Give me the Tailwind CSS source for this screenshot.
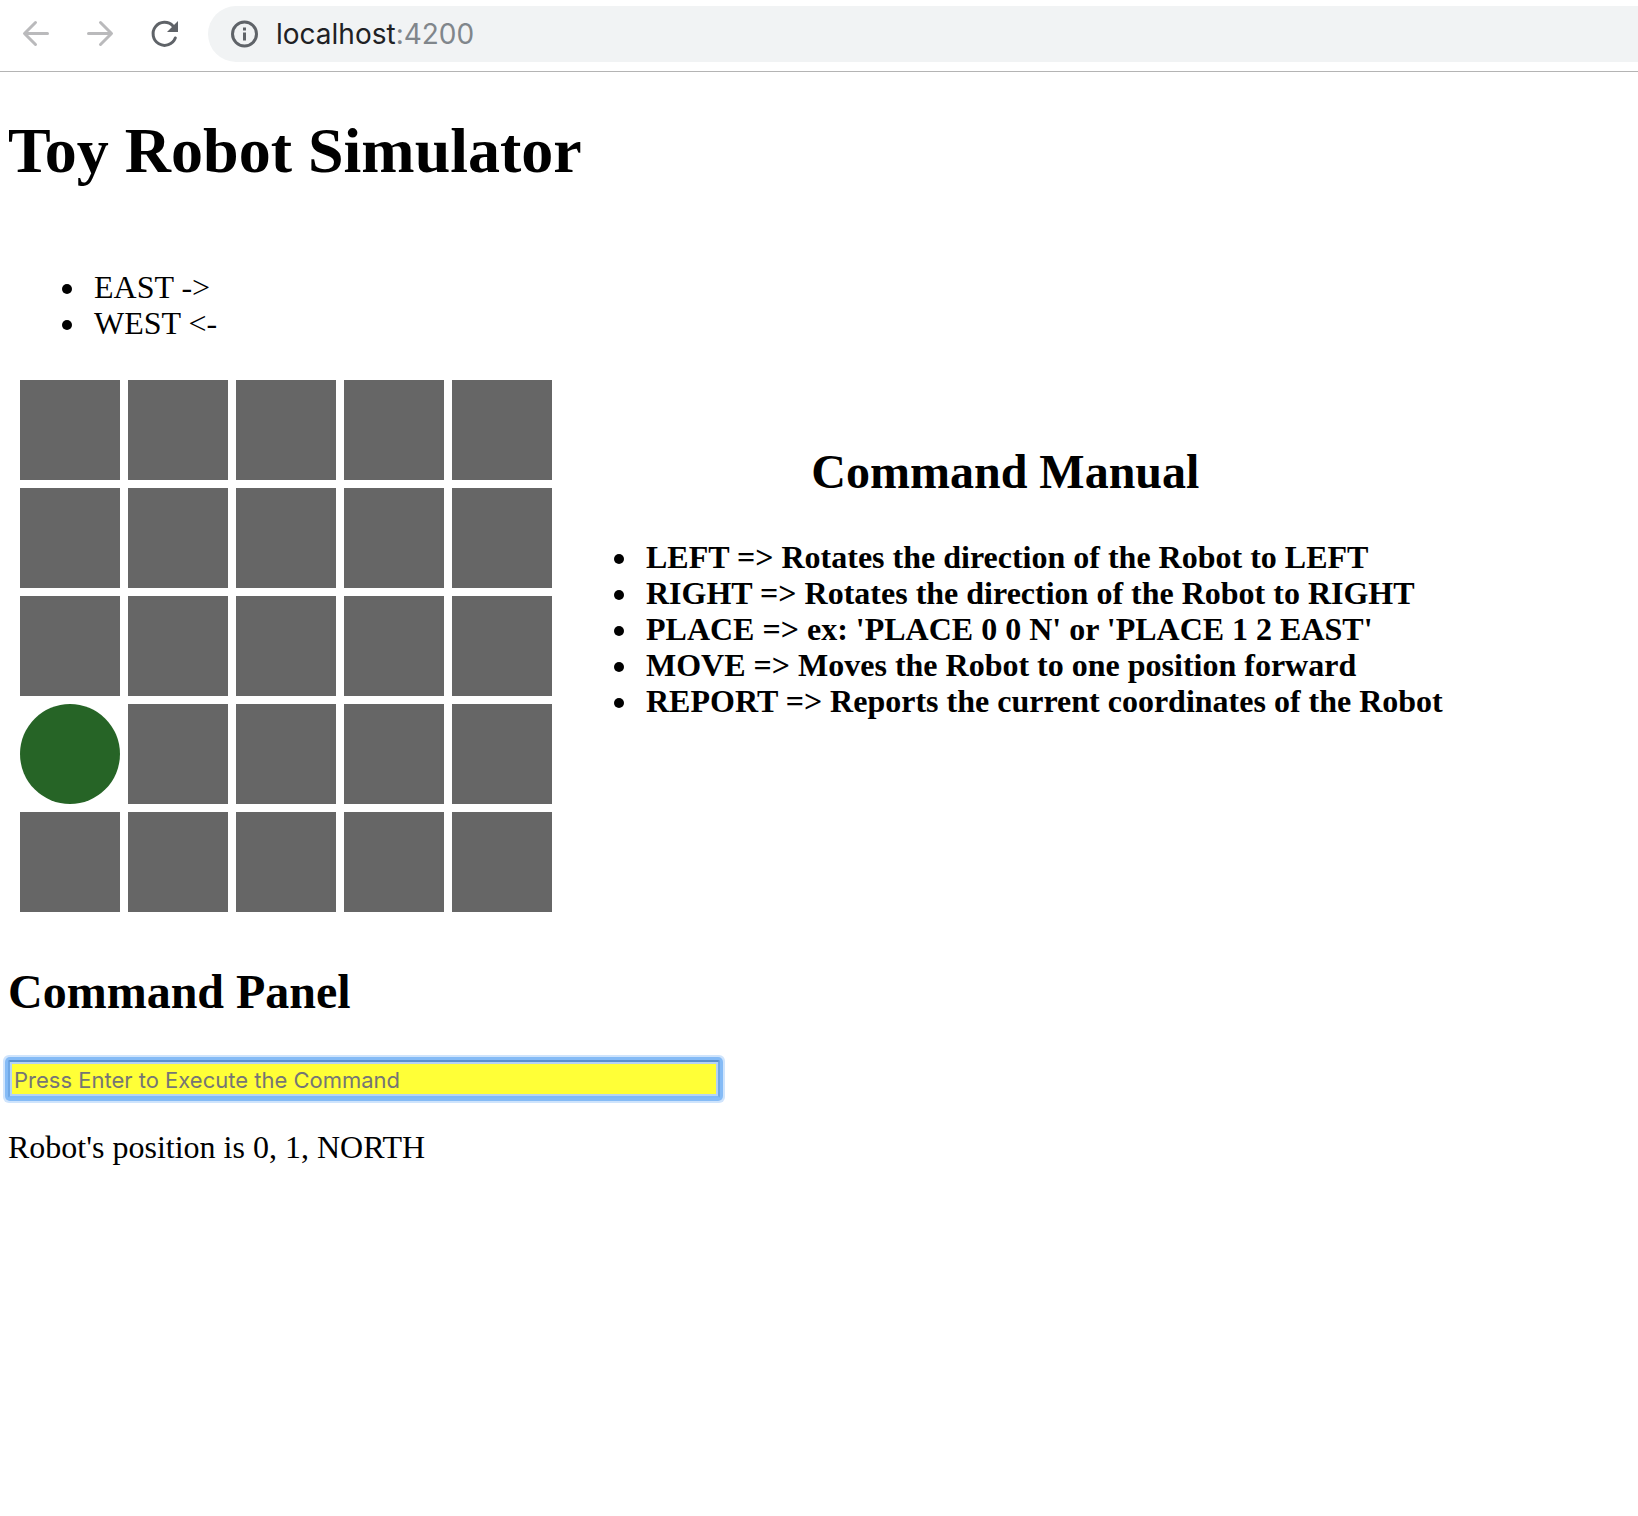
<!DOCTYPE html>
<html lang="en">
<head>
<meta charset="utf-8">
<title>Toy Robot Simulator</title>
<script src="https://cdn.jsdelivr.net/npm/@tailwindcss/browser@4"></script>
</head>
<body class="min-h-screen overflow-x-hidden bg-white font-['Liberation_Serif',serif] text-[32px] leading-9 text-black">
<header class="flex h-18 items-center border-b border-[#b4b4b4] pl-5 pb-[3px]">
  <button type="button" aria-label="Back" class="mr-8 size-8 text-[#bababc]">
    <svg viewBox="0 0 32 32" class="size-8" fill="none" stroke="currentColor" stroke-width="3" stroke-linecap="round" stroke-linejoin="round"><path d="M27.5 15.5H5M15.5 4.500L4.500 15.500L15.500 26.500"/></svg>
  </button>
  <button type="button" aria-label="Forward" class="mr-8 size-8 text-[#bababc]">
    <svg viewBox="0 0 32 32" class="size-8" fill="none" stroke="currentColor" stroke-width="3" stroke-linecap="round" stroke-linejoin="round"><path d="M4.500 15.500H27M16.500 4.500L27.500 15.500L16.500 26.500"/></svg>
  </button>
  <button type="button" aria-label="Reload" class="mr-7 size-8 text-[#5f6368]">
    <svg viewBox="0 0 32 32" class="size-8"><path d="M27.300 20A11.500 11.500 0 1 1 25 8" fill="none" stroke="currentColor" stroke-width="3" stroke-linecap="round"/><path d="M30 3V14H19Z" fill="currentColor"/></svg>
  </button>
  <label class="flex h-14 min-w-0 flex-1 items-center gap-4 rounded-l-full bg-[#f1f3f4] pl-5">
    <svg viewBox="0 0 32 32" class="size-8 text-[#5f6368]" aria-hidden="true"><circle cx="16.500" cy="16" r="12" fill="none" stroke="currentColor" stroke-width="3"/><path d="M15 9.500h3v3h-3zM15 14.500h3v8h-3z" fill="currentColor"/></svg>
    <span class="font-[Inter,sans-serif] text-[28px] text-[#202124]">localhost<span class="text-[#80868b]">:4200</span></span>
  </label>
</header>
<main class="pl-2">
  <h1 class="mt-[43px] text-[64px] leading-[72px] font-bold">Toy Robot Simulator</h1>
  <ul class="mt-[82px] list-disc pl-20">
    <li class="pl-1.5">EAST -&gt;</li>
    <li class="pl-1.5">WEST &lt;-</li>
  </ul>
  <div class="mt-[39px] flex items-start">
    <div class="ml-3 grid shrink-0 grid-cols-5 gap-2">
      <div class="size-25 bg-[#666]"></div><div class="size-25 bg-[#666]"></div><div class="size-25 bg-[#666]"></div><div class="size-25 bg-[#666]"></div><div class="size-25 bg-[#666]"></div>
      <div class="size-25 bg-[#666]"></div><div class="size-25 bg-[#666]"></div><div class="size-25 bg-[#666]"></div><div class="size-25 bg-[#666]"></div><div class="size-25 bg-[#666]"></div>
      <div class="size-25 bg-[#666]"></div><div class="size-25 bg-[#666]"></div><div class="size-25 bg-[#666]"></div><div class="size-25 bg-[#666]"></div><div class="size-25 bg-[#666]"></div>
      <div class="size-25 rounded-full bg-[#266426]"></div><div class="size-25 bg-[#666]"></div><div class="size-25 bg-[#666]"></div><div class="size-25 bg-[#666]"></div><div class="size-25 bg-[#666]"></div>
      <div class="size-25 bg-[#666]"></div><div class="size-25 bg-[#666]"></div><div class="size-25 bg-[#666]"></div><div class="size-25 bg-[#666]"></div><div class="size-25 bg-[#666]"></div>
    </div>
    <section class="mt-[65px] ml-4 font-bold">
      <h2 class="text-center text-5xl leading-[54px]">Command Manual</h2>
      <ul class="mt-10 list-disc pl-18">
        <li class="pl-1.5">LEFT =&gt; Rotates the direction of the Robot to LEFT</li>
        <li class="pl-1.5">RIGHT =&gt; Rotates the direction of the Robot to RIGHT</li>
        <li class="pl-1.5">PLACE =&gt; ex: 'PLACE 0 0 N' or 'PLACE 1 2 EAST'</li>
        <li class="pl-1.5">MOVE =&gt; Moves the Robot to one position forward</li>
        <li class="pl-1.5">REPORT =&gt; Reports the current coordinates of the Robot</li>
      </ul>
    </section>
  </div>
  <h2 class="mt-[53px] text-5xl leading-[54px] font-bold"><label for="command">Command Panel</label></h2>
  <input id="command" type="text" placeholder="Press Enter to Execute the Command" class="mt-[41px] block h-[38px] w-[712px] rounded-xs border-2 border-[#6fa8e6] border-t-[#5a90cd] border-b-[#7fb9f7] bg-[#ffff37] px-1 pt-0.5 font-[Inter,sans-serif] text-[22px] leading-8 shadow-[inset_0_0_0_2px_#b4d3f5,0_0_0_3px_#85bbf6,0_0_0_5px_#cfe4fc] outline-none placeholder:text-[#757575]">
  <p class="mt-[31px]">Robot's position is 0, 1, NORTH</p>
</main>
</body>
</html>
